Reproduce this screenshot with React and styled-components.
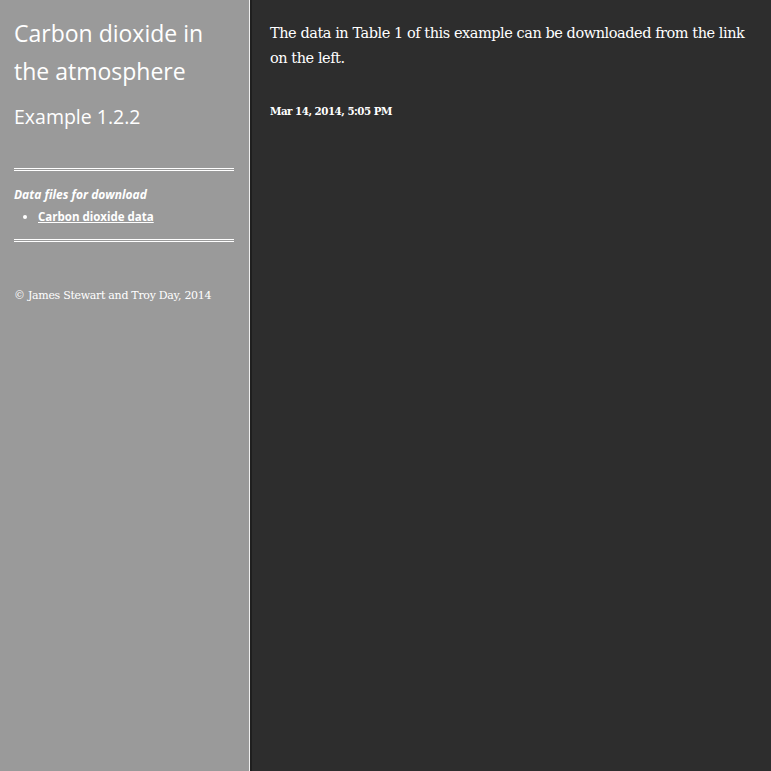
import styled, { createGlobalStyle } from "styled-components";

const GlobalStyle = createGlobalStyle`
  html, body {
    margin: 0;
    padding: 0;
    height: 100%;
    background: #2d2d2d;
  }
  #root {
    height: 100%;
  }
`;

const Page = styled.div`
  display: flex;
  min-height: 771px;
`;

const Sidebar = styled.aside`
  width: 235px;
  flex-shrink: 0;
  background: #9a9a9a;
  border-right: 1px solid #f0f0f0;
  padding: 14px 0 0 14px;
  color: #fff;
  font-family: "Open Sans", "DejaVu Sans", sans-serif;
`;

const Title = styled.h1`
  margin: 0;
  max-width: 220px;
  font-size: 23px;
  font-weight: normal;
  line-height: 38px;
`;

const Subtitle = styled.h2`
  margin: 14px 0 0;
  font-size: 19.5px;
  font-weight: normal;
  line-height: 26px;
`;

const Section = styled.div`
  margin-top: 38px;
  width: 220px;
  border-top: 3px double #fff;
  border-bottom: 3px double #fff;
  padding: 15px 0 14px;
`;

const SectionLabel = styled.div`
  font-size: 12px;
  font-style: italic;
  font-weight: bold;
  line-height: 17px;
`;

const FileList = styled.ul`
  margin: 5px 0 0;
  padding-left: 24px;
  font-size: 11.5px;
  font-weight: bold;
  line-height: 17px;
`;

const FileLink = styled.a`
  color: #fff;
  text-decoration: underline;
`;

const Credit = styled.p`
  margin: 47px 0 0;
  font-family: "DejaVu Serif", "Liberation Serif", serif;
  font-size: 11px;
  letter-spacing: -0.3px;
`;

const Divider = styled.div`
  width: 2px;
  flex-shrink: 0;
  background: #1f1f1f;
`;

const Main = styled.main`
  flex: 1;
  padding: 21px 18px 0 18px;
  color: #fff;
  font-family: "DejaVu Serif", "Liberation Serif", serif;
`;

const Body = styled.p`
  margin: 0;
  font-size: 14.5px;
  line-height: 25px;
  letter-spacing: -0.45px;
`;

const Stamp = styled.p`
  margin: 34px 0 0;
  font-size: 10.3px;
  font-weight: bold;
  letter-spacing: -0.5px;
`;

export default function App() {
  return (
    <>
      <GlobalStyle />
      <Page>
        <Sidebar>
          <Title>Carbon dioxide in the atmosphere</Title>
          <Subtitle>Example 1.2.2</Subtitle>
          <Section>
            <SectionLabel>Data files for download</SectionLabel>
            <FileList>
              <li>
                <FileLink href="#">Carbon dioxide data</FileLink>
              </li>
            </FileList>
          </Section>
          <Credit>© James Stewart and Troy Day, 2014</Credit>
        </Sidebar>
        <Divider />
        <Main>
          <Body>
            The data in Table 1 of this example can be downloaded from the link
            on the left.
          </Body>
          <Stamp>Mar 14, 2014, 5:05 PM</Stamp>
        </Main>
      </Page>
    </>
  );
}
